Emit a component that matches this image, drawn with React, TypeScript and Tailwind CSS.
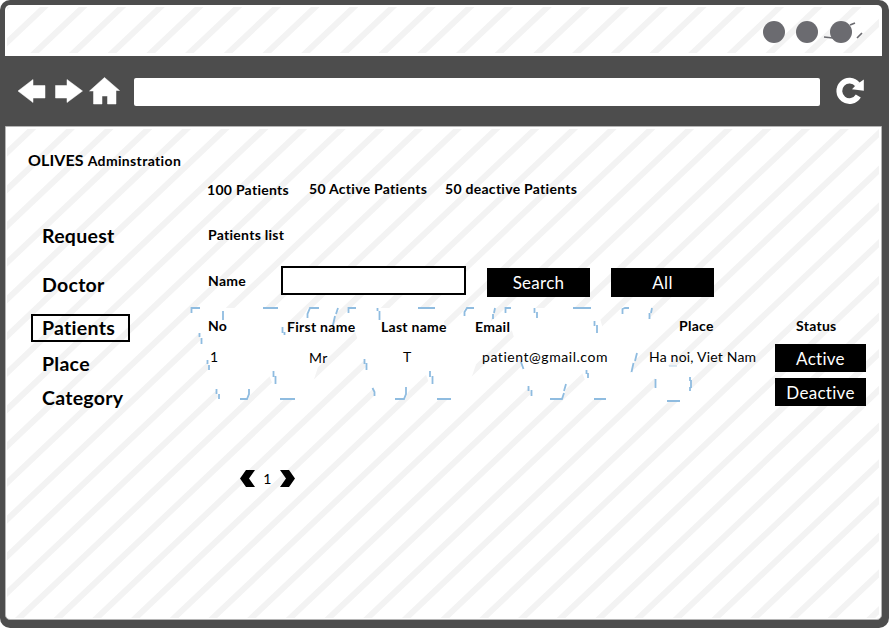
import React from "react";

// Leftover edge strokes of the erased watermark behind the table.
const watermark = [
  "M191.5 313V308H200", "M223 311V320", "M263 308H278", "M199.500 333V337M201.500 338V344", "M207.500 360V364M209 365V370",
  "M216.500 389V394M219 394V399", "M240 399H247L249 394V389", "M273.500 371V377M275.500 376V384", "M280 399H295",
  "M282.500 327V333M284.500 332V335", "M307.500 318V314L310 308H319", "M338 308L336 314M335 316L333 325", "M348.500 313V308H356",
  "M377.500 308V311M379.500 311V320", "M418 308H435", "M364.500 359V364M366.500 363V370", "M372.500 388L374.500 392V396",
  "M395 399H404L406 394V387", "M430 371V377M432.500 376V384", "M437 399H451", "M464.500 316V312L467 308H474",
  "M495 308L494 313M493 314V319", "M505.500 313V308H511", "M534.500 308V313M537 312V318", "M573 308H591",
  "M594.500 321V326M597 325V333", "M637 353L635 361M633.500 363L631.500 372", "M521 362L523.500 369", "M586.500 370V374M588 373V378",
  "M528.500 386V391M531.500 390V396", "M550 399H562L564 393M564 391L566 384", "M594 399H606", "M622.500 314V309L625 308H629",
  "M652 308L651 313M649.500 313V319", "M655.500 379V388", "M690 377V381M691 380V388M690 387V391", "M667 401H680",
];

// Parallel diagonals, running up to the right from the bottom edge.
const diagonals = Array.from({ length: 42 }, (_, i) => {
  const x = 19 + 38.7 * (i - 19);
  return `M${x - 38.7} 655L${x + 658} -5.7`;
}).join("");

const stats = [
  ["100 Patients", "ml-[202px] w-[102px] pt-px"],
  ["50 Active Patients", "w-[136px]"],
  ["50 deactive Patients", ""],
];

function Stripes() {
  return (
    <svg className="pointer-events-none absolute inset-0" width="889" height="629">
      <clipPath id="panes">
        <path d="M7 7H879V53H7ZM7 129H879V618H7Z" />
      </clipPath>
      <path d={diagonals} stroke="#f3f3f3" strokeWidth="6" clipPath="url(#panes)" />
      <g fill="#fff">
        <path id="w" d="M191 308H283L291 336L308 308H338L307 400H279L263 360L248 400H219Z" />
        <use href="#w" x="157" />
        <use href="#w" x="314" />
        <rect x="655" y="366" width="36" height="35" />
      </g>
      <path d={watermark.join("")} fill="none" stroke="#8fbce0" strokeWidth="1.800" />
      <path d="M669 366H677" stroke="#cfe0ee" strokeWidth="1.500" />
    </svg>
  );
}

function Toolbar() {
  return (
    <div className="flex h-[71px] shrink-0 items-center bg-[#4d4d4d]">
      <svg width="129" height="71" viewBox="0 0 129 71" fill="#fff" className="shrink-0">
        <path d="M13 35L28 23.500V29.500H40V42H28V46.500ZM77.500 35L62 23.500V29.500H50.500V42H62V46.500ZM84.500 35L99.500 21.500L114.500 34.500H111V48H102.500V40H97V48H88.500V35Z" stroke="#fff" strokeWidth=".5" strokeLinejoin="round" />
      </svg>
      <div className="h-[28px] w-[686px] rounded-[2px] bg-white" />
      <svg width="57" height="71" viewBox="0 0 57 71" className="shrink-0">
        <path d="M38.300 40A10.200 10.200 0 1 1 37.500 28.500" fill="none" stroke="#fff" strokeWidth="5.800" />
        <path d="M43.800 23.500V34.800L32 33.200L36 29Z" fill="#fff" />
      </svg>
    </div>
  );
}

function Btn({ children, className }: { children: string; className: string }) {
  return (
    <button className={`flex shrink-0 items-center justify-center bg-black pt-px text-white ${className}`}>
      {children}
    </button>
  );
}

export default function App() {
  return (
    <div className="relative flex h-[629px] w-[889px] flex-col bg-white font-['Lato',sans-serif] text-black [font-variant-ligatures:none]">
      <div className="flex h-[628px] flex-col rounded-[10px] bg-[#4d4d4d] px-[5px] pt-[5px] pr-[7px] pb-[8px]">
        <div className="h-[51px] shrink-0 rounded-t-[5px] bg-white" />
        <Toolbar />
        <div className="-mt-px flex-1 rounded-b-[5px] border border-[#b5b5b5] bg-white" />
      </div>
      <Stripes />
      <svg className="absolute top-0 left-[750px]" width="139" height="56">
        <g fill="#6b6b70">
          <circle cx="24" cy="32" r="11" /><circle cx="57" cy="32" r="11" /><circle cx="91" cy="32" r="11" />
        </g>
        <path d="M74 37L83 38M100 25L105 23M107 38L112 33" stroke="#6b6b70" strokeWidth="1.700" />
      </svg>
      <div className="absolute inset-x-0 top-[127px] flex h-[493px] flex-col pl-[5px] text-[14px] leading-[20px] font-bold tracking-[0.280px] whitespace-nowrap">
        <h1 className="mt-[23px] ml-[23px] flex h-[20px] items-baseline gap-1">
          <span className="text-[16px] tracking-[0.100px]">OLIVES</span>
          <span className="tracking-[0.350px]">Adminstration</span>
        </h1>
        <div className="mt-[9px] flex h-[21px]">
          {stats.map(([label, box]) => <span key={label} className={box}>{label}</span>)}
        </div>
        <div className="mt-[25px] flex">
          <nav className="flex w-[186px] shrink-0 flex-col pl-[26px] text-[19.500px] leading-[28px]">
            <a className="-mt-[3px] pl-[11px]">Request</a>
            <a className="mt-[21px] pl-[11px]">Doctor</a>
            <a className="mt-[15px] h-[28px] w-[99px] border-2 border-black pl-[9px] leading-[24px]">Patients</a>
            <a className="mt-[8px] pl-[11px]">Place</a>
            <a className="mt-[6px] pl-[11px]">Category</a>
          </nav>
          <main className="flex-1 pl-[17px]">
            <h2>Patients list</h2>
            <div className="mt-[21px] flex h-[32px] text-[17px] font-normal">
              <label className="w-[73px] pt-[5px] text-[14px] font-bold">Name</label>
              <input className="h-[29px] w-[185px] border-2 border-black bg-white" />
              <Btn className="mt-[2px] ml-[21px] h-[29px] w-[103px]">Search</Btn>
              <Btn className="mt-[2px] ml-[21px] h-[29px] w-[103px]">All</Btn>
            </div>
            <div className="mt-[18px] flex h-[27px]">
              <span className="w-[79px]">No</span>
              <span className="w-[94px] pt-px">First name</span>
              <span className="w-[94px] pt-px">Last name</span>
              <span className="w-[204px] pt-px">Email</span>
              <span className="w-[117px]">Place</span>
              <span>Status</span>
            </div>
            <div className="flex font-normal">
              <span className="w-[101px] pt-[4px] pl-[2px]">1</span>
              <span className="w-[94px] pt-[5px]">Mr</span>
              <span className="w-[79px] pt-[4px]">T</span>
              <span className="w-[167px] pt-[4px] tracking-[0.550px]">patient@gmail.com</span>
              <span className="w-[126px] pt-[4px] tracking-[0.200px]">Ha noi, Viet Nam</span>
              <div className="flex flex-col gap-[6px] pt-px text-[17px]">
                <Btn className="h-[28px] w-[91px]">Active</Btn>
                <Btn className="h-[28px] w-[91px]">Deactive</Btn>
              </div>
            </div>
            <div className="mt-[61px] ml-[32px] flex h-[22px] items-center font-normal">
              <svg width="15" height="17"><path d="M6 0H15L9 8.500L15 17H6L0 8.500Z" /></svg>
              <span className="w-[25px] pt-px text-center">1</span>
              <svg width="15" height="17"><path d="M0 0H9L15 8.500L9 17H0L6 8.500Z" /></svg>
            </div>
          </main>
        </div>
      </div>
    </div>
  );
}
